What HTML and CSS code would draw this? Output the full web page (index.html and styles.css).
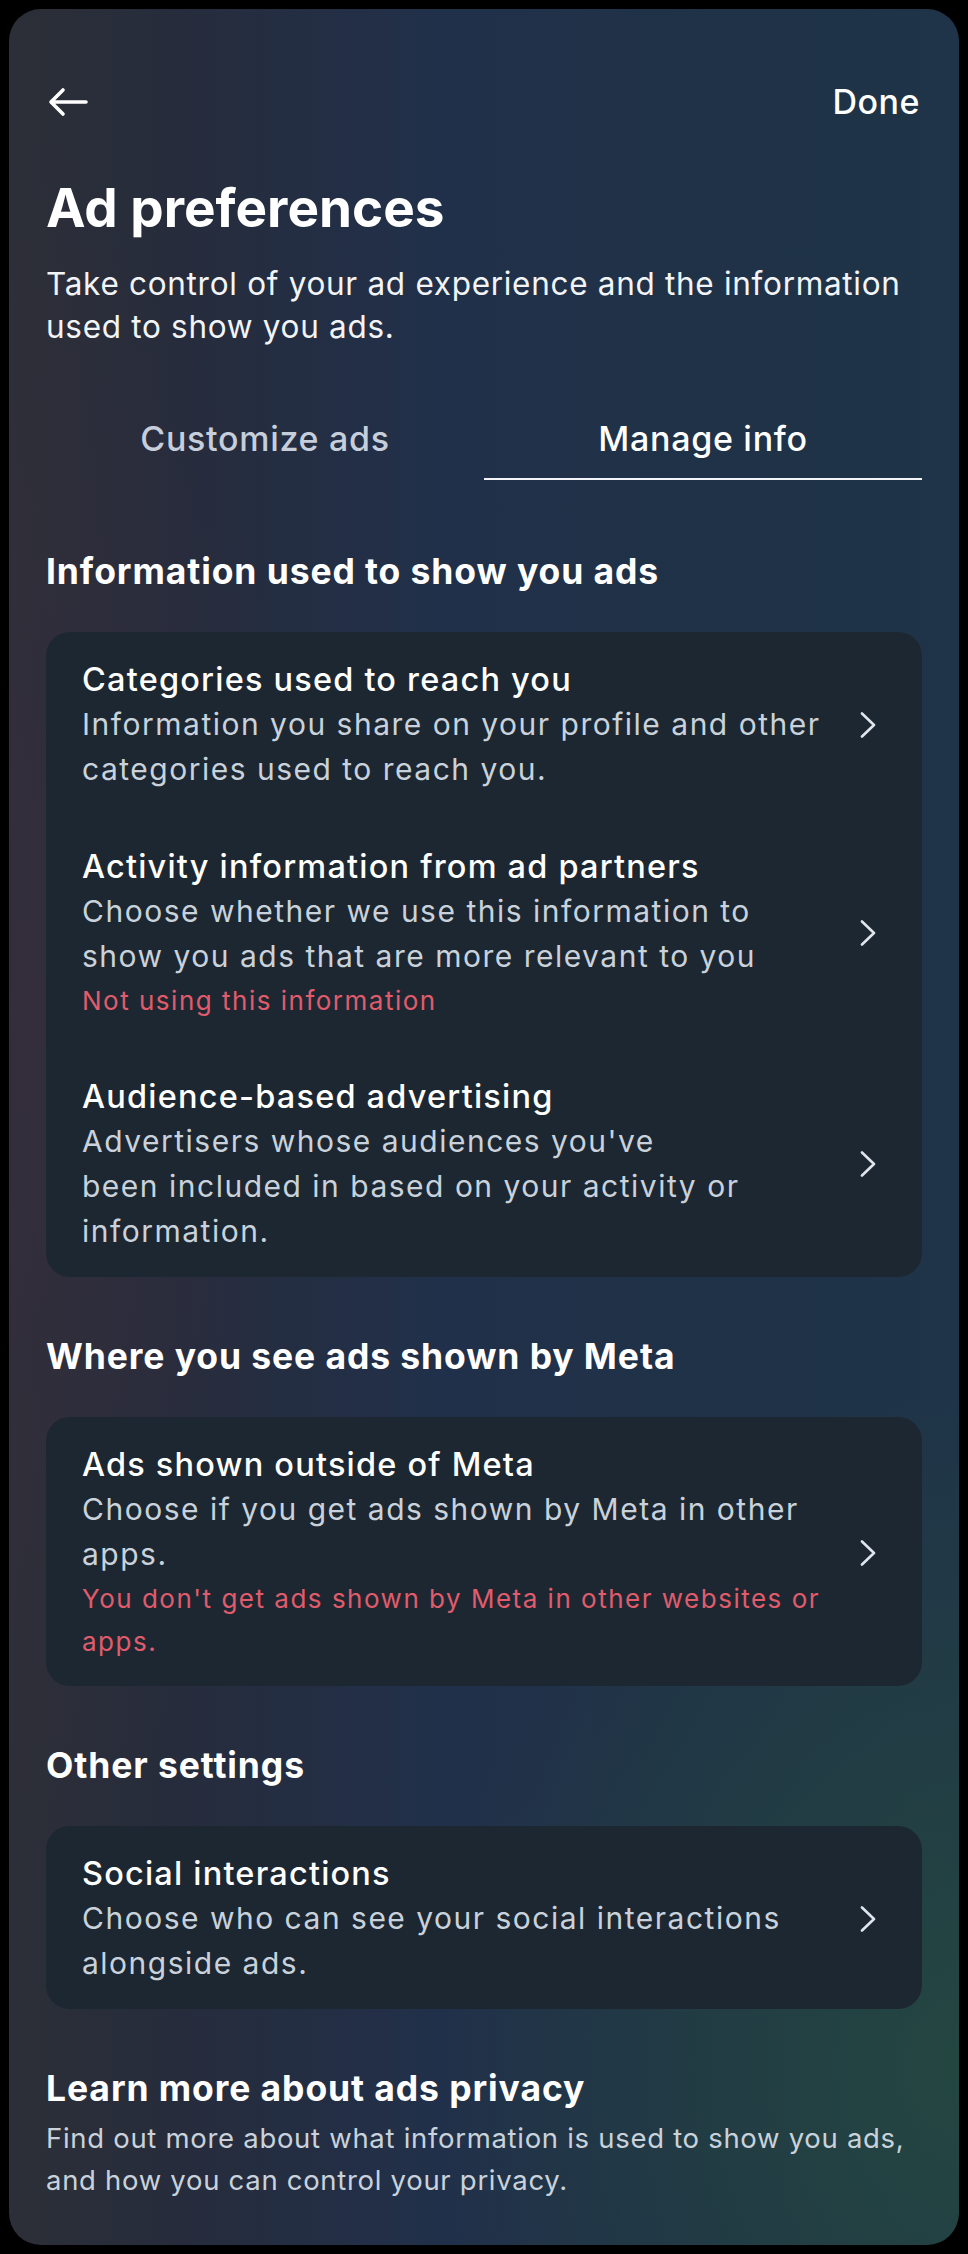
FILE: index.html
```html
<!DOCTYPE html>
<html lang="en">
<head>
<meta charset="utf-8">
<title>Ad preferences</title>
<link rel="stylesheet" href="styles.css">
</head>
<body>
<div class="panel">
  <header class="topbar">
    <svg class="back" width="40" height="30" viewBox="0 0 40 30" aria-label="Back">
      <path d="M38 15 H4 M15 3 L3 15 L15 27" fill="none" stroke="#ffffff" stroke-width="3.6" stroke-linecap="round" stroke-linejoin="round"/>
    </svg>
    <span class="done">Done</span>
  </header>

  <h1 class="title">Ad preferences</h1>
  <p class="subtitle">Take control of your ad experience and the information<br>used to show you ads.</p>

  <nav class="tabs">
    <div class="tab">Customize ads</div>
    <div class="tab active">Manage info</div>
  </nav>

  <section class="section first">
    <h2 class="heading">Information used to show you ads</h2>
    <div class="card">
      <div class="item">
        <div class="text">
          <div class="item-title">Categories used to reach you</div>
          <div class="item-desc">Information you share on your profile and other<br>categories used to reach you.</div>
        </div>
        <svg class="chev" width="18" height="26" viewBox="0 0 18 26"><path d="M3 1.5 L15 13 L3 24.5" fill="none" stroke="#dfe5ec" stroke-width="2.6" stroke-linecap="round" stroke-linejoin="round"/></svg>
      </div>
      <div class="item">
        <div class="text">
          <div class="item-title">Activity information from ad partners</div>
          <div class="item-desc">Choose whether we use this information to<br>show you ads that are more relevant to you</div>
          <div class="item-status">Not using this information</div>
        </div>
        <svg class="chev" width="18" height="26" viewBox="0 0 18 26"><path d="M3 1.5 L15 13 L3 24.5" fill="none" stroke="#dfe5ec" stroke-width="2.6" stroke-linecap="round" stroke-linejoin="round"/></svg>
      </div>
      <div class="item">
        <div class="text">
          <div class="item-title">Audience-based advertising</div>
          <div class="item-desc">Advertisers whose audiences you've<br>been included in based on your activity or<br>information.</div>
        </div>
        <svg class="chev" width="18" height="26" viewBox="0 0 18 26"><path d="M3 1.5 L15 13 L3 24.5" fill="none" stroke="#dfe5ec" stroke-width="2.6" stroke-linecap="round" stroke-linejoin="round"/></svg>
      </div>
    </div>
  </section>

  <section class="section">
    <h2 class="heading">Where you see ads shown by Meta</h2>
    <div class="card">
      <div class="item">
        <div class="text">
          <div class="item-title">Ads shown outside of Meta</div>
          <div class="item-desc">Choose if you get ads shown by Meta in other<br>apps.</div>
          <div class="item-status">You don't get ads shown by Meta in other websites or<br>apps.</div>
        </div>
        <svg class="chev" width="18" height="26" viewBox="0 0 18 26"><path d="M3 1.5 L15 13 L3 24.5" fill="none" stroke="#dfe5ec" stroke-width="2.6" stroke-linecap="round" stroke-linejoin="round"/></svg>
      </div>
    </div>
  </section>

  <section class="section">
    <h2 class="heading">Other settings</h2>
    <div class="card">
      <div class="item">
        <div class="text">
          <div class="item-title">Social interactions</div>
          <div class="item-desc">Choose who can see your social interactions<br>alongside ads.</div>
        </div>
        <svg class="chev" width="18" height="26" viewBox="0 0 18 26"><path d="M3 1.5 L15 13 L3 24.5" fill="none" stroke="#dfe5ec" stroke-width="2.6" stroke-linecap="round" stroke-linejoin="round"/></svg>
      </div>
    </div>
  </section>

  <section class="section learn">
    <h2 class="heading">Learn more about ads privacy</h2>
    <p class="learn-desc">Find out more about what information is used to show you ads,<br>and how you can control your privacy.</p>
  </section>
</div>
</body>
</html>
```

FILE: styles.css
```css
* { box-sizing: border-box; }

html, body {
  margin: 0;
  padding: 0;
  background: #000000;
}

body {
  font-family: "Inter", "Lato", "Liberation Sans", sans-serif;
  color: #ffffff;
  width: 968px;
  height: 2254px;
  overflow: hidden;
}

.panel {
  margin: 9px;
  height: 2236px;
  border-radius: 32px;
  overflow: hidden;
  padding: 70px 37px 0 37px;
  background:
    radial-gradient(ellipse 55% 30% at 100% 92%, rgba(38, 78, 62, 0.7), rgba(38, 78, 62, 0) 100%),
    radial-gradient(ellipse 30% 40% at 0% 45%, rgba(60, 44, 64, 0.5), rgba(60, 44, 64, 0) 100%),
    linear-gradient(90deg, #2c2f37 0%, #262c3c 18%, #21304a 45%, #1f3247 75%, #1f3448 100%);
}

.topbar {
  height: 46px;
  display: flex;
  align-items: center;
  justify-content: space-between;
}

.back {
  display: block;
  margin-left: 2px;
}

.done {
  font-size: 34px;
  font-weight: 500;
  line-height: 46px;
  letter-spacing: 0.5px;
  margin-right: 2px;
}

.title {
  margin: 51px 0 0 0;
  font-size: 53px;
  font-weight: 700;
  line-height: 64px;
}

.subtitle {
  margin: 22px 0 0 0;
  font-size: 31.5px;
  line-height: 43px;
  font-weight: 400;
  letter-spacing: 0.7px;
  color: #f2f4f7;
}

.tabs {
  display: flex;
  margin-top: 70px;
}

.tab {
  flex: 1;
  text-align: center;
  font-size: 34px;
  font-weight: 500;
  line-height: 42px;
  letter-spacing: 0.7px;
  padding-bottom: 18px;
  color: #c7cedb;
  border-bottom: 2px solid transparent;
}

.tab.active {
  color: #ffffff;
  border-bottom-color: #f2f4f7;
}

.section {
  margin-top: 58px;
}

.section.first {
  margin-top: 70px;
}

.heading {
  margin: 0 0 38px 0;
  font-size: 35.5px;
  font-weight: 700;
  line-height: 44px;
  letter-spacing: 0.9px;
}

.card {
  background: #1d2731;
  border-radius: 24px;
  padding: 0;
}

.item {
  display: flex;
  align-items: center;
  padding: 26px 45px 26px 36px;
}

.item:first-child {
  padding-top: 25px;
}

.item:last-child {
  padding-bottom: 23px;
}

.text {
  flex: 1;
  min-width: 0;
}

.item-title {
  font-size: 32.5px;
  font-weight: 500;
  line-height: 45px;
  letter-spacing: 1.2px;
  color: #ffffff;
}

.item-desc {
  font-size: 30px;
  line-height: 45px;
  letter-spacing: 1.5px;
  color: #c9d2db;
}

.item-status {
  font-size: 26px;
  line-height: 43px;
  letter-spacing: 1.5px;
  color: #e05c6c;
}

.chev {
  display: block;
  flex: none;
  margin-left: 20px;
}

.learn .heading {
  margin-bottom: 6px;
}

.learn-desc {
  margin: 0;
  font-size: 27.5px;
  line-height: 42px;
  letter-spacing: 0.7px;
  color: #c9d2db;
}
```
